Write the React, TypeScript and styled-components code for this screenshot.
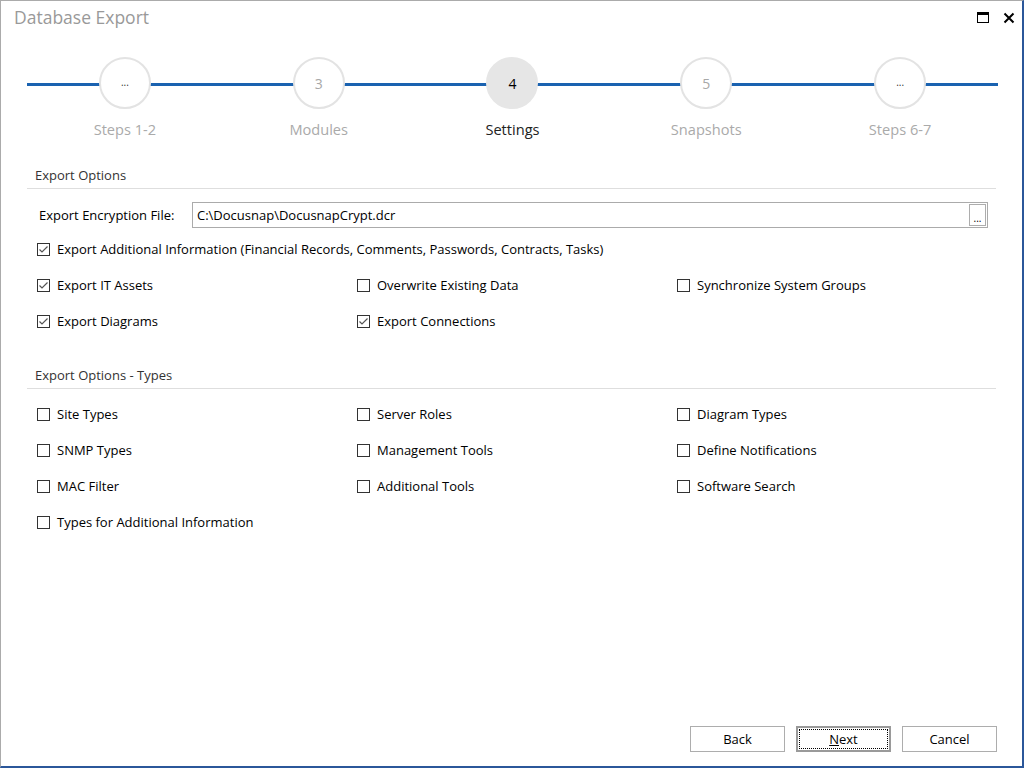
import React from 'react'
import styled, { createGlobalStyle } from 'styled-components'

const GlobalStyle = createGlobalStyle`
  html, body {
    margin: 0;
    padding: 0;
    background: #fff;
  }
  * {
    box-sizing: border-box;
  }
`

const FONT = `"Open Sans", "Noto Sans", "Liberation Sans", sans-serif`

const Frame = styled.div`
  width: 1024px;
  height: 768px;
  display: flex;
  flex-direction: column;
  background: #fff;
  border-top: 1px solid #ababab;
  border-left: 1px solid #ababab;
  border-right: 2px solid #2b579a;
  border-bottom: 2px solid #2b579a;
  font-family: ${FONT};
  color: #000;
  overflow: hidden;
`

const TitleBar = styled.div`
  height: 33px;
  display: flex;
  align-items: center;
  padding: 0 0 0 13px;
`

const Title = styled.div`
  flex: 1;
  font-size: 17.5px;
  color: #999;
  margin-top: -1px;
`

const WinButton = styled.button`
  width: 26px;
  height: 26px;
  padding: 0;
  border: none;
  background: transparent;
  display: flex;
  align-items: center;
  justify-content: center;
`

const Stepper = styled.div`
  position: relative;
  display: grid;
  grid-template-columns: repeat(5, 1fr);
  margin: 23px 24px 0 26px;
  padding: 0 1px;

  &::before {
    content: '';
    position: absolute;
    left: 0;
    right: 0;
    top: 26px;
    height: 3px;
    background: #1a62b0;
  }
`

const Step = styled.div`
  position: relative;
  display: flex;
  flex-direction: column;
  align-items: center;
`

const Circle = styled.div<{ $current?: boolean }>`
  width: 52px;
  height: 52px;
  border-radius: 50%;
  border: 2px solid ${p => (p.$current ? '#e6e6e6' : '#e3e3e3')};
  background: ${p => (p.$current ? '#e6e6e6' : '#fff')};
  display: flex;
  align-items: center;
  justify-content: center;
  font-size: 14px;
  color: ${p => (p.$current ? '#000' : '#a8a8a8')};
`

const Dots = styled.span`
  font-size: 10px;
  color: #333;
  margin-top: -2px;
`

const StepLabel = styled.div<{ $current?: boolean }>`
  margin-top: 10px;
  font-size: 14.6px;
  line-height: 20px;
  color: ${p => (p.$current ? '#222' : '#aaa')};
`

const Content = styled.div`
  margin: 0 26px 0 26px;
`

const SectionHeader = styled.div<{ $top: number }>`
  margin-top: ${p => p.$top}px;
  padding: 0 0 4px 8px;
  font-size: 13px;
  line-height: 18px;
  color: #333;
  border-bottom: 1px solid #dedede;
`

const FileRow = styled.div`
  display: flex;
  align-items: center;
  margin-top: 13px;
  padding: 0 8px 0 12px;
`

const FieldLabel = styled.div`
  width: 153px;
  font-size: 13px;
`

const FileBox = styled.div`
  flex: 1;
  height: 26px;
  border: 1px solid #ababab;
  display: flex;
  align-items: center;
  padding: 0 1px 0 4px;
  font-size: 13px;
`

const FileText = styled.div`
  flex: 1;
`

const BrowseButton = styled.button`
  width: 17px;
  height: 22px;
  padding: 0;
  border: 1px solid #adadad;
  background: #fff;
  font-size: 10px;
  line-height: 26px;
  color: #000;
  font-family: ${FONT};
`

const OptionGrid = styled.div<{ $top: number }>`
  display: grid;
  grid-template-columns: 320px 320px 320px;
  grid-auto-rows: 36px;
  margin-top: ${p => p.$top}px;
  padding-left: 10px;
`

const Wide = styled.div`
  grid-column: 1 / -1;
`

const CheckRow = styled.label`
  display: flex;
  align-items: center;
  height: 36px;
  font-size: 13px;
  color: #000;
`

const Box = styled.span`
  width: 13px;
  height: 13px;
  border: 1px solid #333;
  background: #fff;
  margin-right: 7px;
  display: flex;
  align-items: center;
  justify-content: center;
`

const Footer = styled.div`
  margin-top: auto;
  display: flex;
  justify-content: flex-end;
  gap: 11px;
  padding: 0 25px 14px 0;
`

const Button = styled.button<{ $focused?: boolean }>`
  width: 95px;
  height: 26px;
  background: #fff;
  border: ${p => (p.$focused ? '2px solid #9a9a9a' : '1px solid #adadad')};
  font-family: ${FONT};
  font-size: 13px;
  color: #000;
  padding: 0;
  outline: ${p => (p.$focused ? '1px dotted #000' : 'none')};
  outline-offset: -4px;

  u {
    text-decoration: underline;
  }
`

const Check = ({ label, checked }: { label: string; checked?: boolean }) => (
  <CheckRow>
    <Box>
      {checked && (
        <svg width="11" height="11" viewBox="0 0 11 11">
          <polyline points="1.5,5.5 4,8 9.5,2.5" fill="none" stroke="#555" strokeWidth="1.2" />
        </svg>
      )}
    </Box>
    {label}
  </CheckRow>
)

const steps = [
  { circle: '...', label: 'Steps 1-2' },
  { circle: '3', label: 'Modules' },
  { circle: '4', label: 'Settings', current: true },
  { circle: '5', label: 'Snapshots' },
  { circle: '...', label: 'Steps 6-7' },
]

const typeOptions = [
  'Site Types',
  'Server Roles',
  'Diagram Types',
  'SNMP Types',
  'Management Tools',
  'Define Notifications',
  'MAC Filter',
  'Additional Tools',
  'Software Search',
  'Types for Additional Information',
]

export default function App() {
  return (
    <>
      <GlobalStyle />
      <Frame>
        <TitleBar>
          <Title>Database Export</Title>
          <WinButton aria-label="Maximize">
            <svg width="12" height="12" viewBox="0 0 12 12">
              <rect x="0.5" y="0.5" width="11" height="10" fill="none" stroke="#000" strokeWidth="1" />
              <rect x="0.5" y="0.5" width="11" height="2.5" fill="#000" />
            </svg>
          </WinButton>
          <WinButton aria-label="Close">
            <svg width="12" height="12" viewBox="0 0 12 12">
              <path d="M1.5 1.5 L10.5 10.5 M10.5 1.5 L1.5 10.5" stroke="#000" strokeWidth="2" />
            </svg>
          </WinButton>
        </TitleBar>

        <Stepper>
          {steps.map(s => (
            <Step key={s.label}>
              <Circle $current={s.current}>
                {s.circle === '...' ? <Dots>...</Dots> : s.circle}
              </Circle>
              <StepLabel $current={s.current}>{s.label}</StepLabel>
            </Step>
          ))}
        </Stepper>

        <Content>
          <SectionHeader $top={27}>Export Options</SectionHeader>
          <FileRow>
            <FieldLabel>Export Encryption File:</FieldLabel>
            <FileBox>
              <FileText>C:\Docusnap\DocusnapCrypt.dcr</FileText>
              <BrowseButton>...</BrowseButton>
            </FileBox>
          </FileRow>
          <OptionGrid $top={3}>
            <Wide>
              <Check checked label="Export Additional Information (Financial Records, Comments, Passwords, Contracts, Tasks)" />
            </Wide>
            <Check checked label="Export IT Assets" />
            <Check label="Overwrite Existing Data" />
            <Check label="Synchronize System Groups" />
            <Check checked label="Export Diagrams" />
            <Check checked label="Export Connections" />
          </OptionGrid>

          <SectionHeader $top={27}>Export Options - Types</SectionHeader>
          <OptionGrid $top={7}>
            {typeOptions.map(t => (
              <Check key={t} label={t} />
            ))}
          </OptionGrid>
        </Content>

        <Footer>
          <Button>Back</Button>
          <Button $focused>
            <u>N</u>ext
          </Button>
          <Button>Cancel</Button>
        </Footer>
      </Frame>
    </>
  )
}
